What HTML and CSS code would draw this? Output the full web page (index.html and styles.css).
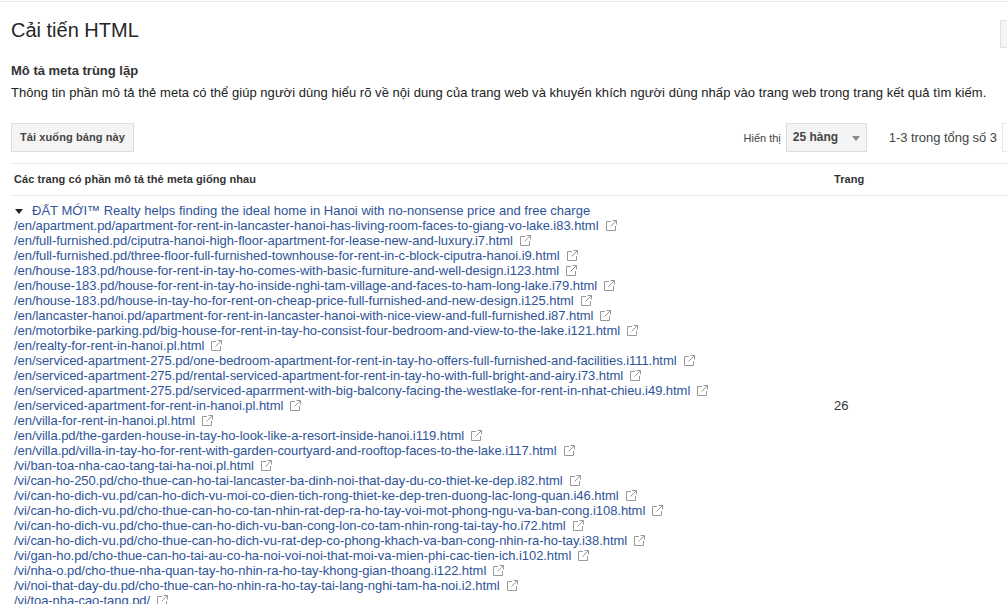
FILE: index.html
```html
<!DOCTYPE html>
<html lang="vi">
<head>
    <meta charset="UTF-8">
    <meta name="viewport" content="width=device-width, initial-scale=1.0">
    <title>Cải tiến HTML</title>
    <link rel="stylesheet" href="styles.css">
</head>
<body>
    <svg class="icon-defs" width="0" height="0">
        <symbol id="ext" viewBox="0 0 11 11">
            <path d="M5 1.5H.5v9h9V6M6.5.5h4v4M10.5.5 4.5 6.5" fill="none" stroke="#999" stroke-width="1"/>
        </symbol>
    </svg>
    <div class="page">
        <div class="title-row">
            <h1>Cải tiến HTML</h1>
            <div class="edge-btn"></div>
        </div>

        <h2>Mô tả meta trùng lặp</h2>
        <p class="desc">Thông tin phần mô tả thẻ meta có thể giúp người dùng hiểu rõ về nội dung của trang web và khuyến khích người dùng nhấp vào trang web trong trang kết quả tìm kiếm.</p>

        <div class="toolbar">
            <button class="btn">Tải xuống bảng này</button>
            <div class="pager">
                <span class="show-label">Hiển thị</span>
                <div class="select">25 hàng<span class="caret"></span></div>
                <span class="count">1-3 trong tổng số 3</span>
                <div class="edge-box"></div>
            </div>
        </div>

        <div class="table-head">
            <div class="col-main">Các trang có phần mô tả thẻ meta giống nhau</div>
            <div class="col-num">Trang</div>
        </div>

        <div class="table-row">
            <div class="col-main">
                <div class="group-title"><span class="arrow"></span><a href="#">ĐẤT MỚI™ Realty helps finding the ideal home in Hanoi with no-nonsense price and free charge</a></div>
                <ul class="links">
                    <li><a href="#">/en/apartment.pd/apartment-for-rent-in-lancaster-hanoi-has-living-room-faces-to-giang-vo-lake.i83.html</a><svg class="ext"><use href="#ext"/></svg></li>
                    <li><a href="#">/en/full-furnished.pd/ciputra-hanoi-high-floor-apartment-for-lease-new-and-luxury.i7.html</a><svg class="ext"><use href="#ext"/></svg></li>
                    <li><a href="#">/en/full-furnished.pd/three-floor-full-furnished-townhouse-for-rent-in-c-block-ciputra-hanoi.i9.html</a><svg class="ext"><use href="#ext"/></svg></li>
                    <li><a href="#">/en/house-183.pd/house-for-rent-in-tay-ho-comes-with-basic-furniture-and-well-design.i123.html</a><svg class="ext"><use href="#ext"/></svg></li>
                    <li><a href="#">/en/house-183.pd/house-for-rent-in-tay-ho-inside-nghi-tam-village-and-faces-to-ham-long-lake.i79.html</a><svg class="ext"><use href="#ext"/></svg></li>
                    <li><a href="#">/en/house-183.pd/house-in-tay-ho-for-rent-on-cheap-price-full-furnished-and-new-design.i125.html</a><svg class="ext"><use href="#ext"/></svg></li>
                    <li><a href="#">/en/lancaster-hanoi.pd/apartment-for-rent-in-lancaster-hanoi-with-nice-view-and-full-furnished.i87.html</a><svg class="ext"><use href="#ext"/></svg></li>
                    <li><a href="#">/en/motorbike-parking.pd/big-house-for-rent-in-tay-ho-consist-four-bedroom-and-view-to-the-lake.i121.html</a><svg class="ext"><use href="#ext"/></svg></li>
                    <li><a href="#">/en/realty-for-rent-in-hanoi.pl.html</a><svg class="ext"><use href="#ext"/></svg></li>
                    <li><a href="#">/en/serviced-apartment-275.pd/one-bedroom-apartment-for-rent-in-tay-ho-offers-full-furnished-and-facilities.i111.html</a><svg class="ext"><use href="#ext"/></svg></li>
                    <li><a href="#">/en/serviced-apartment-275.pd/rental-serviced-apartment-for-rent-in-tay-ho-with-full-bright-and-airy.i73.html</a><svg class="ext"><use href="#ext"/></svg></li>
                    <li><a href="#">/en/serviced-apartment-275.pd/serviced-aparrment-with-big-balcony-facing-the-westlake-for-rent-in-nhat-chieu.i49.html</a><svg class="ext"><use href="#ext"/></svg></li>
                    <li><a href="#">/en/serviced-apartment-for-rent-in-hanoi.pl.html</a><svg class="ext"><use href="#ext"/></svg></li>
                    <li><a href="#">/en/villa-for-rent-in-hanoi.pl.html</a><svg class="ext"><use href="#ext"/></svg></li>
                    <li><a href="#">/en/villa.pd/the-garden-house-in-tay-ho-look-like-a-resort-inside-hanoi.i119.html</a><svg class="ext"><use href="#ext"/></svg></li>
                    <li><a href="#">/en/villa.pd/villa-in-tay-ho-for-rent-with-garden-courtyard-and-rooftop-faces-to-the-lake.i117.html</a><svg class="ext"><use href="#ext"/></svg></li>
                    <li><a href="#">/vi/ban-toa-nha-cao-tang-tai-ha-noi.pl.html</a><svg class="ext"><use href="#ext"/></svg></li>
                    <li><a href="#">/vi/can-ho-250.pd/cho-thue-can-ho-tai-lancaster-ba-dinh-noi-that-day-du-co-thiet-ke-dep.i82.html</a><svg class="ext"><use href="#ext"/></svg></li>
                    <li><a href="#">/vi/can-ho-dich-vu.pd/can-ho-dich-vu-moi-co-dien-tich-rong-thiet-ke-dep-tren-duong-lac-long-quan.i46.html</a><svg class="ext"><use href="#ext"/></svg></li>
                    <li><a href="#">/vi/can-ho-dich-vu.pd/cho-thue-can-ho-co-tan-nhin-rat-dep-ra-ho-tay-voi-mot-phong-ngu-va-ban-cong.i108.html</a><svg class="ext"><use href="#ext"/></svg></li>
                    <li><a href="#">/vi/can-ho-dich-vu.pd/cho-thue-can-ho-dich-vu-ban-cong-lon-co-tam-nhin-rong-tai-tay-ho.i72.html</a><svg class="ext"><use href="#ext"/></svg></li>
                    <li><a href="#">/vi/can-ho-dich-vu.pd/cho-thue-can-ho-dich-vu-rat-dep-co-phong-khach-va-ban-cong-nhin-ra-ho-tay.i38.html</a><svg class="ext"><use href="#ext"/></svg></li>
                    <li><a href="#">/vi/gan-ho.pd/cho-thue-can-ho-tai-au-co-ha-noi-voi-noi-that-moi-va-mien-phi-cac-tien-ich.i102.html</a><svg class="ext"><use href="#ext"/></svg></li>
                    <li><a href="#">/vi/nha-o.pd/cho-thue-nha-quan-tay-ho-nhin-ra-ho-tay-khong-gian-thoang.i122.html</a><svg class="ext"><use href="#ext"/></svg></li>
                    <li><a href="#">/vi/noi-that-day-du.pd/cho-thue-can-ho-nhin-ra-ho-tay-tai-lang-nghi-tam-ha-noi.i2.html</a><svg class="ext"><use href="#ext"/></svg></li>
                    <li><a href="#">/vi/toa-nha-cao-tang.pd/</a><svg class="ext"><use href="#ext"/></svg></li>
                </ul>
            </div>
            <div class="col-num">26</div>
        </div>
    </div>
</body>
</html>
```

FILE: styles.css
```css
html, body {
    height: 100%;
    overflow: hidden;
}
body {
    margin: 0;
    background: #fff;
    color: #333;
    font-family: "Liberation Sans", Arial, sans-serif;
    font-size: 13px;
}
a {
    color: #2f5499;
    text-decoration: none;
}
.icon-defs {
    position: absolute;
}
.page {
    width: 1040px;
    border-top: 1px solid #e8e8e8;
    margin-top: 1px;
    padding-left: 11px;
}
.title-row {
    display: flex;
    height: 45px;
    padding-top: 16px;
    box-sizing: content-box;
    width: 1029px;
}
h1 {
    margin: 0;
    font-size: 20px;
    font-weight: normal;
    line-height: 24px;
    color: #262626;
    flex: 1;
}
.edge-btn {
    width: 40px;
    height: 28px;
    margin: 2px 0 0 0;
    border: 1px solid #e2e2e2;
    background: #f5f5f5;
    box-sizing: border-box;
}
h2 {
    margin: 0;
    font-size: 13px;
    line-height: 16px;
    font-weight: bold;
    color: #333;
}
.desc {
    margin: 6px 0 0;
    line-height: 16px;
    color: #222;
    white-space: nowrap;
    letter-spacing: 0.035px;
}
.toolbar {
    display: flex;
    align-items: center;
    justify-content: space-between;
    margin-top: 22px;
    height: 29px;
}
.btn {
    height: 29px;
    width: 123px;
    padding: 0 0 2px;
    border: 1px solid #dcdcdc;
    background: #f4f4f4;
    color: #444;
    font-family: inherit;
    font-size: 11px;
    font-weight: bold;
    letter-spacing: 0.1px;
}
.pager {
    display: flex;
    align-items: center;
}
.show-label {
    font-size: 11px;
    color: #444;
    margin-right: 5px;
}
.select {
    position: relative;
    width: 81px;
    height: 29px;
    box-sizing: border-box;
    border: 1px solid #dcdcdc;
    background: #f4f4f4;
    color: #444;
    font-size: 12px;
    font-weight: bold;
    line-height: 27px;
    padding-left: 6px;
}
.caret {
    position: absolute;
    right: 6px;
    top: 12px;
    border-left: 4px solid transparent;
    border-right: 4px solid transparent;
    border-top: 5px solid #888;
}
.count {
    margin-left: 22px;
    color: #444;
    font-size: 13px;
    letter-spacing: -0.05px;
}
.edge-box {
    width: 49px;
    height: 29px;
    margin-left: 5px;
    border: 1px solid #e6e6e6;
    box-sizing: border-box;
}
.table-head {
    display: flex;
    align-items: center;
    margin-top: 11px;
    height: 31px;
    padding-bottom: 2px;
    box-sizing: border-box;
    height: 33px;
    border-top: 1px solid #ebebeb;
    border-bottom: 1px solid #ebebeb;
    font-size: 11px;
    font-weight: bold;
    color: #333;
    letter-spacing: 0.07px;
}
.col-main {
    width: 823px;
    padding-left: 3px;
    box-sizing: border-box;
    flex: none;
}
.table-head .col-num {
    padding-left: 0;
}
.table-row {
    display: flex;
    align-items: center;
    padding-top: 7px;
}
.table-row .col-num {
    font-size: 13px;
    color: #333;
}
.group-title, .links li {
    line-height: 15px;
    height: 15px;
    white-space: nowrap;
}
.group-title {
    font-size: 13px;
    letter-spacing: 0.01px;
}
.arrow {
    display: inline-block;
    vertical-align: middle;
    margin: 0 9px 0 1px;
    border-left: 4.5px solid transparent;
    border-right: 4.5px solid transparent;
    border-top: 5px solid #222;
}
.links {
    list-style: none;
    margin: 0;
    padding: 0;
    letter-spacing: -0.05px;
}
.ext {
    width: 11px;
    height: 11px;
    margin-left: 7px;
    vertical-align: -1px;
}
```
